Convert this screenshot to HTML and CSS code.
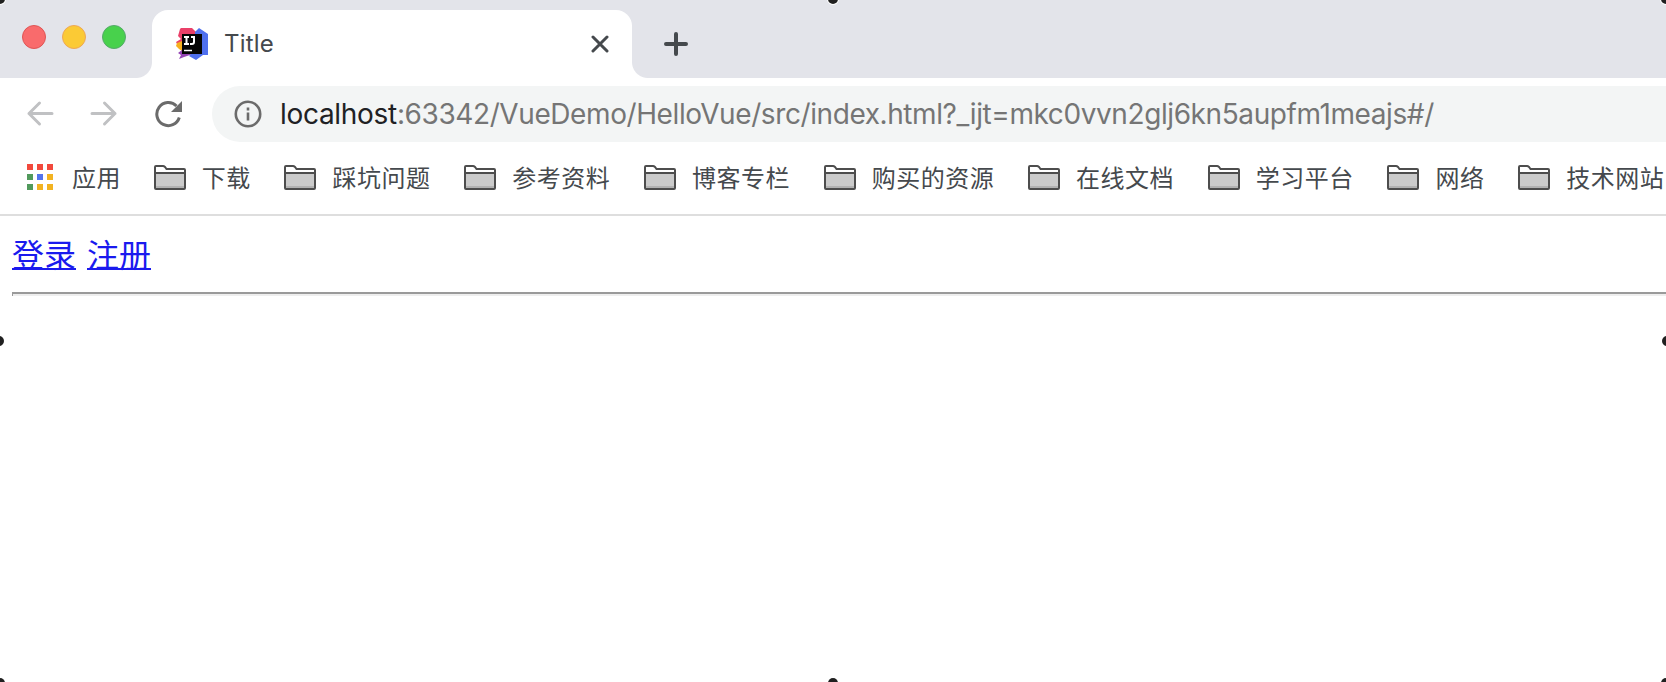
FILE: index.html
```html
<!DOCTYPE html>
<html lang="zh-CN">
<head>
<meta charset="utf-8">
<title>Title</title>
<link rel="stylesheet" href="styles.css">
</head>
<body>
<svg class="symbols" width="0" height="0">
  <symbol id="folder" viewBox="0 0 32 26">
    <path d="M1 4Q1 2 3 2H9Q10 2 11 3L12.500 5H29Q31 5 31 7V23Q31 24 30 24H2Q1 24 1 23Z" fill="#fff"/>
    <path d="M1 9H31V24H1Z" fill="#cbcbcb"/>
    <path d="M2 23H30" stroke="#b2b2b2" stroke-width="2"/>
    <path d="M1 3Q1 2 2 2H9Q10 2 11 3L12.500 5H30Q31 5 31 6V24Q31 25 30 25H2Q1 25 1 24ZM1 9H31" fill="none" stroke="#4d4d4d" stroke-width="2"/>
  </symbol>
</svg>
<header class="tabstrip">
  <div class="lights"><i class="red"></i><i class="yellow"></i><i class="green"></i></div>
  <div class="tab">
    <svg class="favicon" viewBox="0 0 32 32">
      <path d="M4 1L5 0H16L20 4L27 8V18H2L0 14L5 11L2 8Z" fill="#ea4069"/>
      <path d="M1 15L6 13V23L3 21L0 18Z" fill="#f6b01e"/>
      <path d="M2 25L6 22L20 25L8 29L3 31L5 27Z" fill="#9545b5"/>
      <path d="M19 4L23 0L32 6V27H27L20 32L13 28L19 22Z" fill="#4f70ee"/>
      <path d="M6 6H26V26H6Z" fill="#050505"/>
      <path d="M8 9H13M10.500 9V16M8 16H13M15 9H18V14Q18 16 16 16H14" fill="none" stroke="#fff" stroke-width="2"/>
      <path d="M8 22.500H16" stroke="#fff" stroke-width="1.500"/>
    </svg>
    <span class="tab-title">Title</span>
    <svg class="close" viewBox="0 0 18 18"><path d="M2 2L16 16M16 2L2 16"/></svg>
  </div>
  <svg class="plus" viewBox="0 0 24 24"><path d="M12 2V22M2 12H22"/></svg>
</header>
<nav class="toolbar">
  <svg class="nav-icon faded" viewBox="0 0 28 28"><path d="M26 13.500H3M13.500 3L3 13.500L13.500 24"/></svg>
  <svg class="nav-icon faded" viewBox="0 0 28 28"><path d="M2 13.500H25M14.500 3L25 13.500L14.500 24"/></svg>
  <svg class="nav-icon" viewBox="0 0 28 28"><path d="M25.300 17.500A11.500 11.500 0 1 1 22.500 6"/><path class="solid" d="M28 1V12H17Z"/></svg>
  <div class="omnibox">
    <svg class="info" viewBox="0 0 28 28"><circle cx="14" cy="14" r="12.200"/><path d="M14 7.500V10.500M14 12.500V20.500"/></svg>
    <span class="url"><b>localhost</b>:63342/VueDemo/HelloVue/src/index.html?_ijt=mkc0vvn2glj6kn5aupfm1meajs#/</span>
  </div>
</nav>
<div class="bookmarks">
  <div class="bookmark apps">
    <svg class="grid" viewBox="0 0 26 26">
      <path d="M0 0h6v6h-6zM10 0h6v6h-6zM20 0h6v6h-6z" fill="#f2493c"/>
      <path d="M0 10h6v6h-6zM0 20h6v6h-6z" fill="#519a5c"/>
      <path d="M10 10h6v6h-6z" fill="#5374ed"/>
      <path d="M20 10h6v6h-6zM10 20h6v6h-6zM20 20h6v6h-6z" fill="#f2b322"/>
    </svg><span>应用</span>
  </div>
  <div class="bookmark"><svg class="folder"><use href="#folder"/></svg><span>下载</span></div>
  <div class="bookmark"><svg class="folder"><use href="#folder"/></svg><span>踩坑问题</span></div>
  <div class="bookmark"><svg class="folder"><use href="#folder"/></svg><span>参考资料</span></div>
  <div class="bookmark"><svg class="folder"><use href="#folder"/></svg><span>博客专栏</span></div>
  <div class="bookmark"><svg class="folder"><use href="#folder"/></svg><span>购买的资源</span></div>
  <div class="bookmark"><svg class="folder"><use href="#folder"/></svg><span>在线文档</span></div>
  <div class="bookmark"><svg class="folder"><use href="#folder"/></svg><span>学习平台</span></div>
  <div class="bookmark"><svg class="folder"><use href="#folder"/></svg><span>网络</span></div>
  <div class="bookmark"><svg class="folder"><use href="#folder"/></svg><span>技术网站</span></div>
</div>
<main class="page">
  <div class="links"><a href="#/login">登录</a><a href="#/register">注册</a></div>
  <div class="rule"></div>
</main>
<svg class="handles" viewBox="0 0 1666 682">
  <circle cx="0" cy="-1" r="5"/><circle cx="833" cy="-1" r="5"/><circle cx="1666" cy="-1" r="5"/>
  <circle cx="-1" cy="341" r="5"/><circle cx="1667" cy="341" r="5"/>
  <circle cx="0" cy="683" r="5"/><circle cx="833" cy="683" r="5"/><circle cx="1666" cy="683" r="5"/>
</svg>
</body>
</html>
```

FILE: styles.css
```css
* { box-sizing: border-box; }
body {
  margin: 0;
  width: 1666px;
  height: 682px;
  overflow: hidden;
  position: relative;
  background: #fff;
  font-family: Inter, "Noto Sans CJK SC", sans-serif;
}
.symbols { position: absolute; }
svg { display: block; flex: none; }
.tabstrip {
  height: 78px;
  padding-top: 10px;
  display: flex;
  align-items: flex-start;
  background: #e3e4ea;
}
.lights { width: 152px; padding: 15px 0 0 22px; display: flex; gap: 16px; }
.lights i { width: 24px; height: 24px; border-radius: 50%; border: 1px solid; }
.lights .red { background: #f96b6c; border-color: #df5555; }
.lights .yellow { background: #fbca35; border-color: #eea756; }
.lights .green { background: #48d14c; border-color: #55a96a; }
.tab {
  position: relative;
  width: 480px;
  height: 68px;
  padding: 0 24px;
  display: flex;
  align-items: center;
  background: #fff;
  border-radius: 16px 16px 0 0;
}
.tab::before, .tab::after {
  content: "";
  position: absolute;
  bottom: 0;
  width: 16px;
  height: 16px;
}
.tab::before { left: -16px; background: radial-gradient(circle at 0 0, transparent 15.5px, #fff 16.5px); }
.tab::after { right: -16px; background: radial-gradient(circle at 100% 0, transparent 15.5px, #fff 16.5px); }
.favicon { width: 32px; height: 32px; }
.tab-title { flex: 1; margin-left: 16px; padding-bottom: 2px; font-size: 24px; letter-spacing: .2px; color: #45494d; }
.close { width: 18px; height: 18px; margin-right: -1px; }
.close path, .plus path { fill: none; stroke: #45494d; stroke-width: 3; stroke-linecap: round; }
.plus { width: 24px; height: 24px; margin: 22px 0 0 32px; }
.plus path { stroke-width: 4; }
.toolbar { height: 64px; padding: 8px 0 0 26px; display: flex; align-items: flex-start; }
.nav-icon { width: 28px; height: 28px; margin: 14px 36px 0 0; fill: none; stroke: #6b6b6b; stroke-width: 3; }
.nav-icon.faded { stroke: #c0c1c3; stroke-linecap: round; stroke-linejoin: round; }
.nav-icon .solid { fill: #6b6b6b; stroke: none; }
.omnibox {
  flex: 1;
  height: 56px;
  margin-left: -6px;
  padding-left: 22px;
  display: flex;
  align-items: center;
  background: #f3f5f5;
  border-radius: 28px 0 0 28px;
}
.info { width: 28px; height: 28px; fill: none; stroke: #6b6b6b; stroke-width: 2.6; }
.url { margin-left: 18px; font-size: 28px; letter-spacing: -.41px; color: #757575; white-space: nowrap; }
.url b { font-weight: 400; color: #202124; letter-spacing: -.3px; }
.bookmarks {
  height: 74px;
  padding-bottom: 2px;
  display: flex;
  align-items: center;
  border-bottom: 2px solid #dedede;
}
.bookmark { flex: none; display: flex; align-items: center; gap: 16.25px; margin-right: 33.5px; }
.bookmark span { font: 24px/36px "Noto Sans CJK SC", sans-serif; letter-spacing: .5px; color: #45494d; }
.bookmark.apps { gap: 19px; margin: 0 32.5px 0 27px; }
.grid { width: 26px; height: 26px; }
.folder { width: 32px; height: 26px; }
.page { padding: 16px 0 0 12px; }
.links { height: 60px; display: flex; gap: 11px; font: 32px/48px "Noto Sans CJK SC", sans-serif; }
.links a { color: #1a1aee; text-decoration: none; height: 38px; line-height: 42px; border-bottom: 2px solid #1a1aee; }
.rule { height: 4px; border-top: 2px solid #9a9a9a; border-left: 1px solid #9a9a9a; background: #eee; }
.handles { position: absolute; inset: 0; width: 1666px; height: 682px; pointer-events: none; }
.handles circle { fill: #202020; stroke: #fff; stroke-width: 2; paint-order: stroke; }
```
